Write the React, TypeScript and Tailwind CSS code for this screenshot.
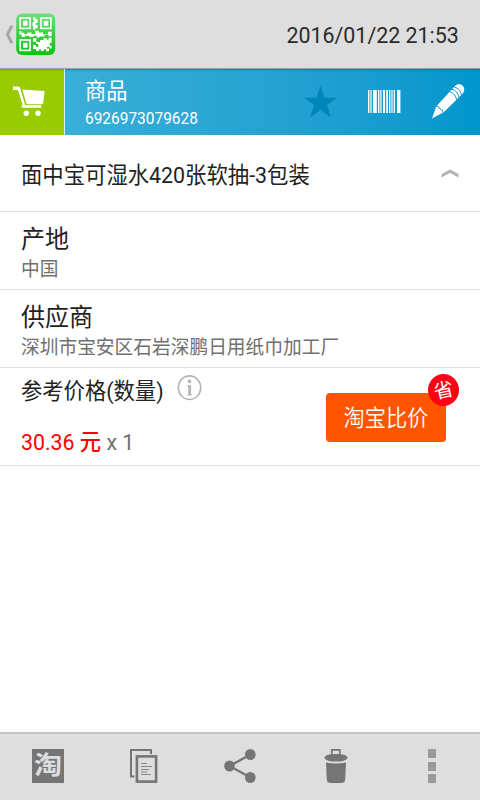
import React from "react";

const fontStack = "font-['Roboto','Noto_Sans_CJK_SC',sans-serif]";

function Text({ className = "", children }: { className?: string; children: React.ReactNode }) {
  return (
    <span className={`block w-max origin-left scale-x-[0.943] whitespace-pre ${className}`}>{children}</span>
  );
}

function QrLogo() {
  return (
    <svg className="h-[43px] w-10" viewBox="16 13 40 43">
      <defs>
        <linearGradient id="qr" x1="0" y1="0" x2="0" y2="1">
          <stop offset="0" stopColor="#6de07a" />
          <stop offset="0.5" stopColor="#3dd043" />
          <stop offset="1" stopColor="#09c411" />
        </linearGradient>
      </defs>
      <rect x="16.2" y="13.5" width="39" height="41.5" rx="6" fill="url(#qr)" />
      <g fill="none" stroke="#fff" strokeWidth="1.6">
        <rect x="20.2" y="18" width="9.9" height="10.4" />
        <rect x="41" y="18" width="9.9" height="10.4" />
        <rect x="20.2" y="40" width="9.9" height="10.4" />
      </g>
      <g fill="#fff">
        <path d="M23 20.8h4.6v5H23zM43.7 20.8h4.6v5h-4.6zM23 42.8h4.6v5H23z" />
        <path d="M33 17.2h2.4v1.8h2.2v4h-2v2h2v3.2h-2.2v1.6H33v-4h-.6v-3.2H34v-2.6h-1z" />
        <path d="M19.4 31h2v1.8h3V34h3v-1.5h4V34h4v-3.2h3.4v1.6H43v1.8h5v-2.4h3.6v4.5h-3v-1.6h-4v1.7h-5.2v1h-2.6v-1.6h-3.4v1.3h-4.2v-1.3H25V37h-3.3v-2.5h-2.3z" />
        <path d="M33 38.2h3.4v3.6H33zM40 40h3.5v-1.8H47v1.6h1.6v-2h3v5h-1.8v3h1.8v2.8h-2V47H47v1.6h2v2.6h-3v-2h-2.2V51H41v-1.6h-2v1.7h-3v-2h-3v-4h3v2h2.2V44H36v-2h4z" />
      </g>
    </svg>
  );
}

function Header() {
  return (
    <header className="flex h-[69px] items-center border-b border-[#9e9e9e] bg-[#dedede] pl-[5px] pr-[21px]">
      <svg className="mr-[2px] h-[19px] w-[9px]" viewBox="0 0 9 19">
        <path d="M5.2.7h3.2L4.2 9.4l4.2 8.8H5.2L.8 9.4z" fill="#a5a5a5" />
      </svg>
      <QrLogo />
      <span className="ml-auto mt-[3px] block w-max origin-right scale-x-[0.943] text-[22.7px] leading-7 text-[#2b2b2b]">
        2016/01/22 21:53
      </span>
    </header>
  );
}

function ProductBar() {
  return (
    <section className="flex h-[66px] bg-linear-to-r from-[#3fb2da] to-[#0096cc] shadow-[inset_0_3px_2px_-2px_rgba(0,50,70,0.35)]">
      <div className="flex h-full w-[65px] shrink-0 items-center border-r border-[#d9f0f7] bg-[#9c0] pl-[13px] shadow-[inset_0_3px_2px_-2px_rgba(50,70,0,0.35)]">
        <svg className="h-8 w-8" viewBox="13 86 32 32" fill="#fff">
          <path d="M13 86.6h5.7q1 0 1.3 1l5.2 17.7h16v2.4H22.8q-1.5 0-1.2-1.3l.9-2.2-4.6-14.2H13z" />
          <path d="M22.4 89.6l22.2 1.5-1.3 12q-.2 1.1-1.3 1.1H26.5z" />
          <circle cx="26.3" cy="113.3" r="2.7" />
          <circle cx="38" cy="113.3" r="2.7" />
        </svg>
      </div>
      <div className="pl-5 pt-2 text-white">
        <Text className="text-[22.5px] leading-[29px]">商品</Text>
        <Text className="text-[16.4px] leading-[25px]">6926973079628</Text>
      </div>
      <div className="ml-auto flex pr-[15px] pt-[14px]">
        <svg className="mr-[31px] mt-[2px] h-[34px] w-[33px]" viewBox="0 0 33 34">
          <path d="M16.5 1l4 11.8H33l-10 7.3 3.8 12.5-10.3-7.5L6.2 32.6 10 20.1 0 12.8h12.5z" fill="#0085b8" />
        </svg>
        <svg className="mr-[31px] mt-[7px] h-[23px] w-[33px]" viewBox="0 0 33 23">
          <path
            d="M0 0h1.4v23H0zM2.4 0h1.2v23H2.4zM5 0h3.8v23H5zM10 0h1.4v23H10zM12.3 0h1.2v23h-1.2zM15 0h2v23h-2zM18.2 0h1.7v23h-1.7zM21 0h1.4v23H21zM23.4 0h1.2v23h-1.2zM25.7 0H27v23h-1.3zM29 0h3.4v23H29z"
            fill="#fff"
          />
        </svg>
        <svg className="h-9 w-[33px]" viewBox="432 83 33 36">
          <path d="M432 118.6l4.2-12.2L455 86q4-4 7.8-.2 3 3.7-.3 8L444 112z" fill="#fff" />
          <g fill="none" stroke="#0c9dcf" strokeWidth="1">
            <path d="M436.2 106.2q3.1-.1 3.6 2.7 3.3.3 3.4 3.7M449.8 91.7q5.3 1.2 7 8.3M452 89.3q5.5 1.3 7 8.3M454.3 87q5.7 1.2 7.2 8" />
          </g>
        </svg>
      </div>
    </section>
  );
}

function Detail({ label, value }: { label: string; value: string }) {
  return (
    <section className="h-[78px] border-b border-[#dedede] pl-[21px] pt-[9px]">
      <Text className="text-[25.5px] leading-9 text-[#222]">{label}</Text>
      <Text className="text-[19.85px] leading-[26px] text-[#707070]">{value}</Text>
    </section>
  );
}

function PriceRow() {
  return (
    <section className="flex h-[98px] justify-between border-b border-[#dedede] pl-[21px] pr-[34px]">
      <div className="pt-[7px]">
        <div className="flex">
          <Text className="mt-px text-[22.6px] leading-8 text-[#222]">参考价格(数量)</Text>
          <svg className="ml-[5px] h-[26px] w-[25px]" viewBox="0 0 25 26">
            <ellipse cx="12.5" cy="12.7" rx="11.2" ry="11.8" fill="none" stroke="#b5b5b5" strokeWidth="1.6" />
            <path d="M10.3 10.2h3.8v9.2h1v1.2h-4.8v-1.2h.9v-8h-.9z" fill="#b5b5b5" />
            <ellipse cx="12.5" cy="6.3" rx="1.8" ry="1.9" fill="#b5b5b5" />
          </svg>
        </div>
        <Text className="mt-[19px] text-[22.6px] leading-8 text-[#707070]">
          <span className="text-[#f00]">30.36 <b className="font-medium">元</b></span> x 1
        </Text>
      </div>
      <button className="relative mt-[25px] flex h-[49px] w-[120px] items-center justify-center rounded-[4px] bg-[#ff5500] text-white">
        <span className="block scale-x-[0.943] whitespace-nowrap text-[22.5px] font-[350] leading-8">淘宝比价</span>
        <span className="absolute -top-[19px] left-[102px] flex h-8 w-[31px] items-center justify-center rounded-[50%] bg-[#ff0014]">
          <span className="block translate-y-px -rotate-12 text-[19.5px] leading-7">省</span>
        </span>
      </button>
    </section>
  );
}

function Footer() {
  return (
    <footer className="mt-auto grid h-[68px] grid-cols-5 items-start justify-items-center border-t-2 border-[#c4c4c4] bg-[#dedede] pt-[15px]">
      <span className="flex h-[34px] w-8 items-center justify-center overflow-hidden bg-[#757575]">
        <span className="block scale-y-90 text-[28px] font-bold leading-none text-[#dedede]">淘</span>
      </span>
      <svg className="h-[34px] w-7" viewBox="0 0 28 34">
        <path d="M4.5 27.5H1V1h20v4" fill="none" stroke="#757575" strokeWidth="2" />
        <rect x="6.9" y="7.4" width="19.2" height="25.2" fill="none" stroke="#757575" strokeWidth="2.6" />
        <path d="M11 14.5h6M11 17.5h11M11 20.5h8M11 23h6M11 25.5h10" stroke="#858585" />
      </svg>
      <svg className="h-[34px] w-8" viewBox="0 0 32 34">
        <path d="M26.5 5.5L5.5 17l21 11.5" fill="none" stroke="#757575" strokeWidth="2.3" />
        <ellipse cx="26.3" cy="5.5" rx="5.3" ry="5.5" fill="#757575" />
        <ellipse cx="5.5" cy="17" rx="5.3" ry="5.5" fill="#757575" />
        <ellipse cx="26.3" cy="28.5" rx="5.3" ry="5.5" fill="#757575" />
      </svg>
      <svg className="h-[34px] w-6" viewBox="0 0 24 34" fill="#757575">
        <path d="M7.8 6V.8h8V6" fill="none" stroke="#757575" strokeWidth="1.7" />
        <path d="M.5 8.3Q2 5 12 5t11.5 3.3v.6Q22 12.5 12 12.5T.5 8.9zM2 13.6q10 2 20 0l-.8 17.2Q20.8 34 17 34H7q-3.8 0-4.2-3.2z" />
      </svg>
      <div className="flex h-[34px] flex-col justify-between">
        <i className="h-[9px] w-2 bg-[#9a9a9a]" />
        <i className="h-[9px] w-2 bg-[#9a9a9a]" />
        <i className="h-[9px] w-2 bg-[#9a9a9a]" />
      </div>
    </footer>
  );
}

export default function App() {
  return (
    <main className={`flex h-[800px] w-[480px] flex-col overflow-hidden bg-white ${fontStack}`}>
      <Header />
      <ProductBar />
      <section className="flex h-[77px] items-center justify-between border-b border-[#dedede] pl-[21px] pr-[21px] pt-[2px] text-[#222]">
        <Text className="mt-[3px] text-[22.65px] leading-8">面中宝可湿水420张软抽-3包装</Text>
        <svg className="-mt-[2px] h-[9px] w-[18px]" viewBox="0 0 18 9">
          <path d="M.5 5L9 .6 17.5 5v3.4L9 4 .5 8.4z" fill="#b3b3b3" />
        </svg>
      </section>
      <Detail label="产地" value="中国" />
      <Detail label="供应商" value="深圳市宝安区石岩深鹏日用纸巾加工厂" />
      <PriceRow />
      <Footer />
    </main>
  );
}
